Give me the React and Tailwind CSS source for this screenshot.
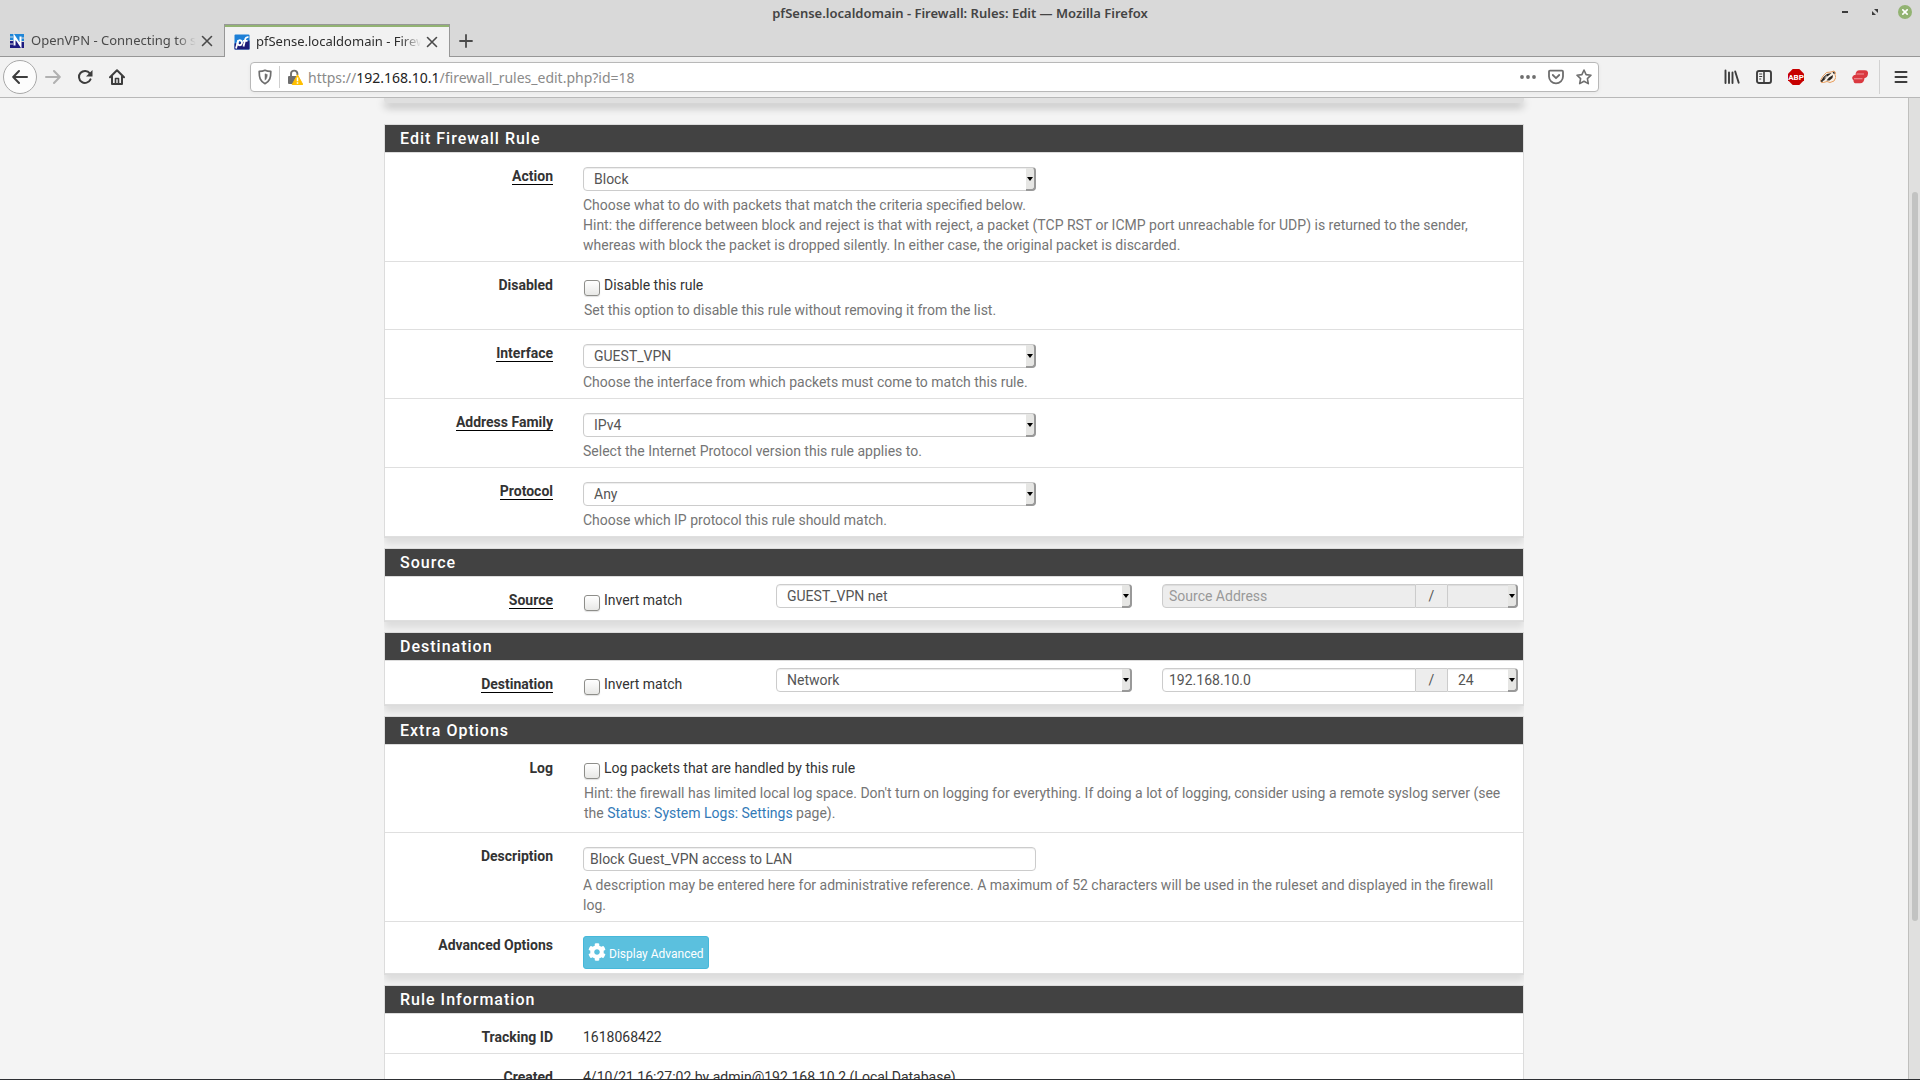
// src/App.jsx
import { FaCog } from "react-icons/fa";

const HELP = "text-sm leading-5 text-[#757575]";
const FIELD =
  "h-6 w-full border border-[#ccc] bg-white text-sm leading-5 text-[#555] shadow-[inset_0_1px_1px_rgba(0,0,0,0.075)] outline-none";

/* ---------- browser icons ---------- */

function CloseIcon() {
  return (
    <svg width="12" height="12" viewBox="0 0 12 12" stroke="#4a4a4a" strokeWidth="1.6" strokeLinecap="round">
      <path d="M1.5 1.5l9 9M10.5 1.5l-9 9" />
    </svg>
  );
}

function NetgateIcon() {
  return (
    <svg width="16" height="16" viewBox="0 0 16 16">
      <path d="M1 1h14v7H1z" fill="#1f86d8" />
      <path d="M1 8h14v7H1z" fill="#1d1a80" />
      <path d="M0 4h4M0 7.500h4M0 11h4" stroke="#d9d9d9" strokeWidth="1.200" />
      <path d="M5.500 12.500v-9l6 9v-9" fill="none" stroke="#fff" strokeWidth="2" />
      <path d="M12 5h4M12 8.500h4" stroke="#d9d9d9" strokeWidth="1" />
    </svg>
  );
}

function PfSenseIcon() {
  return (
    <svg width="16" height="16" viewBox="0 0 16 16">
      <rect x="0.500" y="0.500" width="15" height="15" rx="1" fill="#1d7fd6" />
      <path d="M0.500 9.500l15-3V15a.5.5 0 0 1-.5.5H1a.5.5 0 0 1-.5-.5z" fill="#1b1a78" />
      <g fill="none" stroke="#fff" strokeWidth="1.800">
        <path d="M2 14.500L4.200 6.200" />
        <ellipse cx="5.800" cy="8.700" rx="2.200" ry="2.500" transform="rotate(15 5.800 8.700)" />
        <path d="M9.500 12.500l1.800-7.500c.4-1.700 1.300-2.200 3.200-1.900M9 6.800h4.500" />
      </g>
    </svg>
  );
}

function BackIcon() {
  return (
    <svg width="16" height="16" viewBox="0 0 16 16" fill="none" stroke="#3d3d3d" strokeWidth="2" strokeLinecap="round" strokeLinejoin="round">
      <path d="M15 8H1.500M7 2L1.200 8 7 14" />
    </svg>
  );
}

function ForwardIcon() {
  return (
    <svg width="16" height="16" viewBox="0 0 16 16" fill="none" stroke="#b1b1b1" strokeWidth="2" strokeLinecap="round" strokeLinejoin="round">
      <path d="M1 8h13.500M9 2l5.800 6L9 14" />
    </svg>
  );
}

function ReloadIcon() {
  return (
    <svg width="16" height="16" viewBox="0 0 16 16" fill="none" stroke="#3d3d3d" strokeWidth="2" strokeLinecap="round">
      <path d="M13.500 10.300A6 6 0 1 1 12.800 4.300" />
      <path d="M15.500 1v6.500H9z" fill="#3d3d3d" stroke="none" />
    </svg>
  );
}

function HomeIcon() {
  return (
    <svg width="16" height="16" viewBox="0 0 16 16" fill="none" stroke="#3d3d3d" strokeWidth="2" strokeLinecap="round" strokeLinejoin="round">
      <path d="M1 8.200L8 1.200l7 7M3 7.500V15h10V7.500" />
      <path d="M6.500 14.500V9.500h3v5" strokeWidth="1.600" />
    </svg>
  );
}

function ShieldIcon() {
  return (
    <svg width="14" height="16" viewBox="0 0 14 16" fill="none" stroke="#6e6e6e" strokeWidth="1.700" strokeLinejoin="round">
      <path d="M7 1.200c1.800.9 3.800 1.200 5.800 1.200 0 6-.8 10-5.800 12.300C2 12.400 1.200 8.400 1.200 2.400 3.200 2.400 5.200 2.100 7 1.200z" />
      <path d="M7 4.800v6.400c1.600-1.200 2.200-3 2.300-5.600z" fill="#6e6e6e" strokeWidth="0.500" />
    </svg>
  );
}

function LockWarnIcon() {
  return (
    <svg width="16" height="16" viewBox="0 0 16 16">
      <path d="M4 8V4.800a3.200 3.200 0 0 1 6.400 0V6" fill="none" stroke="#6e6e6e" strokeWidth="1.900" />
      <rect x="1" y="7" width="10" height="8" rx="1" fill="#6e6e6e" />
      <path d="M10.500 5.800L15.800 15.500H5.200z" fill="#ffbf00" stroke="#ffbf00" strokeLinejoin="round" />
      <path d="M10.500 8.600v3.600M10.500 13.300v1.500" stroke="#fff" strokeWidth="1.500" />
    </svg>
  );
}

function PocketIcon() {
  return (
    <svg width="16" height="16" viewBox="0 0 16 16" fill="none" stroke="#6e6e6e" strokeWidth="1.800" strokeLinecap="round" strokeLinejoin="round">
      <path d="M2 1.700h12a1 1 0 0 1 1 1V7.500a7 6.800 0 0 1-14 0V2.700a1 1 0 0 1 1-1z" />
      <path d="M4.800 6L8 9.200 11.200 6" />
    </svg>
  );
}

function StarIcon() {
  return (
    <svg width="16" height="16" viewBox="0 0 16 16" fill="none" stroke="#6e6e6e" strokeWidth="1.600" strokeLinejoin="round">
      <path d="M8 1l2.100 4.600 4.900.6-3.600 3.400.9 5L8 12.200 3.700 14.600l.9-5L1 6.200l4.900-.6z" />
    </svg>
  );
}

function LibraryIcon() {
  return (
    <svg width="16" height="16" viewBox="0 0 16 16" fill="none" stroke="#3d3d3d" strokeWidth="1.900" strokeLinecap="round">
      <path d="M1.500 1.500v12.500M5 3.500V14M8.500 3.500V14M11.200 2.500l3.500 11.200" />
    </svg>
  );
}

function SidebarIcon() {
  return (
    <svg width="16" height="16" viewBox="0 0 16 16" fill="none" stroke="#3d3d3d" strokeWidth="1.900">
      <rect x="1" y="2" width="14" height="12" rx="2" />
      <path d="M8 2v12" strokeWidth="1.600" />
      <path d="M3.200 5h3M3.200 7.500h3M3.200 10h2" strokeWidth="1" />
    </svg>
  );
}

function AdblockIcon() {
  return (
    <svg width="16" height="16" viewBox="0 0 16 16">
      <path d="M4.700 0h6.600L16 4.700v6.600L11.300 16H4.700L0 11.300V4.700z" fill="#c70000" />
      <text x="8" y="11" textAnchor="middle" fontSize="8" fontWeight="700" fill="#fff" className="font-['Roboto',sans-serif]">
        ABP
      </text>
    </svg>
  );
}

function BadgerIcon() {
  return (
    <svg width="16" height="16" viewBox="0 0 16 16">
      <path d="M0.500 11.500L3 7l3.500-3.500L11 3l3-1 1.700 1.500-.7 2 .8 3-1.800 3.500-4 1.500-3-1-3.500 1H1.500z" fill="#f8f1e8" stroke="#e58a3c" strokeWidth="0.800" strokeLinejoin="round" />
      <path d="M1 12l2.500-4L7 5l4.500-1L9 6.200 6.500 8 4 11.500z" fill="#2a2420" />
      <path d="M6.500 11.500l2.500-3 4-2.500-.5 3-3 2.500z" fill="#2a2420" />
      <path d="M4.500 9l2.500-2.300" stroke="#f8f1e8" strokeWidth="0.900" />
      <path d="M12.500 3l1.500-.3 1 1.300-1 1.200z" fill="#2a2420" />
      <path d="M0.800 11.300h2v1.500h-2z" fill="#2a2420" />
    </svg>
  );
}

function ExpressVpnIcon() {
  return (
    <svg width="16" height="16" viewBox="0 0 16 16">
      <path d="M7.500 1.200h5.500a3 3 0 0 1 3 3.300c-.2 2.800-1.500 4.700-4 4.700h.5c-.3 3-1.700 5.100-4.500 5.100H4.300c-2 0-3-1.300-2.800-3.100C.2 10.300-.1 9 .5 7.800 1.200 6.300 2.300 6 3.500 6 3.600 3 5 1.200 7.500 1.200z" fill="#da3940" />
      <path d="M4.500 5h7.500M2 9.800h8.500" stroke="#f0989c" strokeWidth="1.100" />
    </svg>
  );
}

/* ---------- browser window ---------- */

function TitleBar() {
  return (
    <header className="relative flex h-6 shrink-0 items-center justify-center">
      <h1 className="pt-[2px] text-[13px] leading-5 font-semibold text-[#444]">
        pfSense.localdomain - Firewall: Rules: Edit — Mozilla Firefox
      </h1>
      <div className="absolute top-[5px] right-2 flex items-center gap-4">
        <button aria-label="Minimize" className="flex size-[14px] items-center justify-center">
          <span className="h-[2px] w-[6px] bg-[#3c3c3c]" />
        </button>
        <button aria-label="Restore" className="flex size-[14px] items-center justify-center">
          <svg width="6" height="6" viewBox="0 0 6 6" fill="#3c3c3c">
            <path d="M2 0h4v4zM0 2v4h4z" />
          </svg>
        </button>
        <button aria-label="Close" className="flex size-[14px] items-center justify-center rounded-full bg-[#92b372]">
          <svg width="6" height="6" viewBox="0 0 6 6" stroke="#fff" strokeWidth="1.600">
            <path d="M0.300 0.300l5.400 5.400M5.700 0.300L0.300 5.700" />
          </svg>
        </button>
      </div>
    </header>
  );
}

function Tab({ icon, title, active }) {
  return (
    <div
      className={
        active
          ? "flex w-[226px] items-center border-x border-t border-[#979797] bg-[#f2f2f2] pt-px pr-[11px] pl-[9px] text-[#2e2e2e] shadow-[inset_0_2px_0_#92b372]"
          : "mb-px flex w-56 items-center pt-[2px] pr-[11px] pl-[9px] text-[#4a4a4a]"
      }
    >
      {icon}
      <span className="ml-[6px] flex-1 overflow-hidden text-[13px] whitespace-nowrap [mask-image:linear-gradient(to_right,#000_88%,transparent)]">
        {title}
      </span>
      <button aria-label="Close tab" className="ml-[5px]">
        <CloseIcon />
      </button>
    </div>
  );
}

function TabStrip() {
  return (
    <nav className="flex h-[33px] shrink-0 bg-[linear-gradient(#979797,#979797)] bg-[length:100%_1px] bg-bottom bg-no-repeat">
      <Tab icon={<NetgateIcon />} title="OpenVPN - Connecting to site" />
      <Tab active icon={<PfSenseIcon />} title="pfSense.localdomain - Firewall" />
      <button aria-label="New tab" className="ml-[9px]">
        <svg width="14" height="14" viewBox="0 0 14 14" stroke="#4a4a4a" strokeWidth="1.800" strokeLinecap="round">
          <path d="M7 1v12M1 7h12" />
        </svg>
      </button>
    </nav>
  );
}

function Toolbar() {
  return (
    <div className="flex h-[41px] shrink-0 items-center border-b border-[#b8b8b8] bg-[#f2f2f2]">
      <button aria-label="Back" className="ml-[3px] flex size-[34px] items-center justify-center rounded-full border border-[#a8a8a8] bg-[#fcfcfc]">
        <BackIcon />
      </button>
      <div className="ml-2 flex gap-4">
        <button aria-label="Forward">
          <ForwardIcon />
        </button>
        <button aria-label="Reload">
          <ReloadIcon />
        </button>
        <button aria-label="Home">
          <HomeIcon />
        </button>
      </div>
      <div className="ml-[125px] flex h-[30px] flex-1 items-center rounded border border-[#b8b8b8] bg-white pr-[6px] pl-[7px] shadow-[0_1px_4px_rgba(0,0,0,0.05)]">
        <ShieldIcon />
        <span className="mx-[7px] h-[22px] w-px bg-[#cfcfcf]" />
        <LockWarnIcon />
        <p className="ml-[5px] flex-1 pt-px text-sm text-[#8a8a8a]">
          https://<span className="text-[#222]">192.168.10.1</span>/firewall_rules_edit.php?id=18
        </p>
        <div className="flex gap-3">
          <button aria-label="Page actions">
            <svg width="16" height="16" viewBox="0 0 16 16" fill="#6e6e6e">
              <circle cx="2" cy="8" r="1.900" />
              <circle cx="8" cy="8" r="1.900" />
              <circle cx="14" cy="8" r="1.900" />
            </svg>
          </button>
          <button aria-label="Save to Pocket">
            <PocketIcon />
          </button>
          <button aria-label="Bookmark">
            <StarIcon />
          </button>
        </div>
      </div>
      <div className="ml-[125px] flex gap-4">
        <button aria-label="Library">
          <LibraryIcon />
        </button>
        <button aria-label="Sidebars">
          <SidebarIcon />
        </button>
        <button aria-label="Adblock Plus">
          <AdblockIcon />
        </button>
        <button aria-label="Privacy Badger">
          <BadgerIcon />
        </button>
        <button aria-label="ExpressVPN">
          <ExpressVpnIcon />
        </button>
      </div>
      <span className="ml-[11px] h-[34px] w-px bg-[#d2d2d2]" />
      <button aria-label="Menu" className="mr-3 ml-[14px]">
        <svg width="14" height="14" viewBox="0 0 14 14" stroke="#3d3d3d" strokeWidth="2" strokeLinecap="round">
          <path d="M1.500 2h11M1.500 7h11M1.500 12h11" />
        </svg>
      </button>
    </div>
  );
}

/* ---------- form pieces ---------- */

function Panel({ title, children }) {
  return (
    <section className="mb-[10px] border border-[#dcdcdc] bg-white shadow-[0_6px_8px_rgba(0,0,0,0.1)]">
      <h2 className="h-7 border-b border-[#dcdcdc] bg-[#424242] bg-clip-padding px-[15px] text-base leading-[27px] font-medium tracking-[1px] text-white">
        {title}
      </h2>
      {children}
    </section>
  );
}

function RowLabel({ htmlFor, required, children }) {
  const Tag = htmlFor ? "label" : "span";
  return (
    <Tag htmlFor={htmlFor} className="pt-[13px] text-right text-sm leading-5 font-bold text-[#333]">
      <span className={required ? "border-b border-black" : ""}>{children}</span>
    </Tag>
  );
}

function Row({ label, htmlFor, required, className = "pt-[14px] pb-[6px]", children }) {
  return (
    <div className="grid grid-cols-[168px_1fr] gap-x-[30px] border-b border-[#dfdfdf]">
      <RowLabel htmlFor={htmlFor} required={required}>
        {label}
      </RowLabel>
      <div className={`pr-[15px] ${className}`}>{children}</div>
    </div>
  );
}

function Select({ className = "rounded", options, ...props }) {
  return (
    <div className="relative w-full">
      <select {...props} className={`${FIELD} ${className} block appearance-none pr-3 pl-[10px] disabled:bg-[#ededed] disabled:opacity-100`}>
        {options.map((option) => (
          <option key={option}>{option}</option>
        ))}
      </select>
      <span className="pointer-events-none absolute inset-y-0 right-0 flex w-[10px] items-center justify-center rounded-r border-t border-r-2 border-b-2 border-t-[#ccc] border-r-[#999] border-b-[#999] bg-[#e6e6e4]">
        <svg width="6" height="4" viewBox="0 0 6 4">
          <path d="M0 0h6L3 4z" />
        </svg>
      </span>
    </div>
  );
}

function Checkbox({ id, label }) {
  return (
    <label htmlFor={id} className="ml-px flex items-start gap-1 text-sm leading-5 text-[#333]">
      <input
        id={id}
        type="checkbox"
        className="mt-[5px] size-4 shrink-0 appearance-none rounded-[3px] border border-[#8e8e8a] bg-linear-to-b from-white to-[#e8e8e6] shadow-[0_1px_1px_rgba(0,0,0,0.12)]"
      />
      {label}
    </label>
  );
}

function SelectRow({ id, label, options, children }) {
  return (
    <Row label={label} htmlFor={id} required>
      <div className="w-[453px]">
        <Select id={id} options={options} />
      </div>
      <p className={`mt-1 ${HELP}`}>{children}</p>
    </Row>
  );
}

function AddressRow({ name, label, type, address, placeholder, mask, disabled }) {
  return (
    <div className="grid grid-cols-[168px_163px_1fr_1fr] gap-x-[30px] border-b border-[#dfdfdf] pr-[5px]">
      <RowLabel required>{label}</RowLabel>
      <div className="pt-[13px]">
        <Checkbox id={`${name}_not`} label="Invert match" />
      </div>
      <div className="pt-[7px] pb-3">
        <Select aria-label={`${label} type`} options={[type]} />
      </div>
      <div className="flex pt-[7px] pb-3">
        <input
          type="text"
          aria-label={`${label} address`}
          defaultValue={address}
          placeholder={placeholder}
          disabled={disabled}
          className={`${FIELD} flex-1 rounded-l px-[6px] placeholder:text-[#999] disabled:bg-[#ededed]`}
        />
        <span className="h-6 w-[31px] border-y border-[#ccc] bg-[#ededed] text-center text-sm leading-[22px] text-[#555]">/</span>
        <div className="w-[71px]">
          <Select aria-label={`${label} mask`} options={[mask]} disabled={disabled} className="rounded-r" />
        </div>
      </div>
    </div>
  );
}

function RuleForm() {
  return (
    <form className="overflow-x-clip font-['Roboto',sans-serif]" onSubmit={(e) => e.preventDefault()}>
      <Panel title="Edit Firewall Rule">
        <SelectRow id="action" label="Action" options={["Block", "Pass", "Reject"]}>
          Choose what to do with packets that match the criteria specified below.
          <br />
          Hint: the difference between block and reject is that with reject, a packet (TCP RST or ICMP port unreachable
          for UDP) is returned to the sender, whereas with block the packet is dropped silently. In either case, the
          original packet is discarded.
        </SelectRow>
        <Row label="Disabled" className="pt-[13px] pb-[9px]">
          <Checkbox id="disabled" label="Disable this rule" />
          <p className={`mt-1 ml-px ${HELP}`}>Set this option to disable this rule without removing it from the list.</p>
        </Row>
        <SelectRow id="interface" label="Interface" options={["GUEST_VPN"]}>
          Choose the interface from which packets must come to match this rule.
        </SelectRow>
        <SelectRow id="ipprotocol" label="Address Family" options={["IPv4", "IPv6", "IPv4+IPv6"]}>
          Select the Internet Protocol version this rule applies to.
        </SelectRow>
        <SelectRow id="proto" label="Protocol" options={["Any", "TCP", "UDP"]}>
          Choose which IP protocol this rule should match.
        </SelectRow>
      </Panel>

      <Panel title="Source">
        <AddressRow name="src" label="Source" type="GUEST_VPN net" placeholder="Source Address" mask="" disabled />
      </Panel>

      <Panel title="Destination">
        <AddressRow name="dst" label="Destination" type="Network" address="192.168.10.0" mask="24" />
      </Panel>

      <Panel title="Extra Options">
        <Row label="Log" className="pt-[13px] pb-[9px]">
          <Checkbox id="log" label="Log packets that are handled by this rule" />
          <p className={`mt-1 ml-px ${HELP}`}>
            Hint: the firewall has limited local log space. Don't turn on logging for everything. If doing a lot of
            logging, consider using a remote syslog server (see the{" "}
            <a href="#settings" className="text-[#337ab7]">
              Status: System Logs: Settings
            </a>{" "}
            page).
          </p>
        </Row>
        <Row label="Description" htmlFor="descr">
          <input id="descr" type="text" defaultValue="Block Guest_VPN access to LAN" className={`${FIELD} block max-w-[453px] rounded px-[6px]`} />
          <p className={`mt-1 ${HELP}`}>
            A description may be entered here for administrative reference. A maximum of 52 characters will be used in
            the ruleset and displayed in the firewall log.
          </p>
        </Row>
        <Row label="Advanced Options" className="pt-[14px] pb-1">
          <button
            type="button"
            className="flex h-[33px] items-center gap-[3px] rounded-[3px] border border-[#46b8da] bg-[#5bc0de] px-1 pt-[2px] text-xs text-white"
          >
            <FaCog size={18} className="mb-1" />
            Display Advanced
          </button>
        </Row>
      </Panel>

      <Panel title="Rule Information">
        <Row label="Tracking ID" className="pt-[13px] pb-[6px]">
          <p className="text-sm leading-5 text-[#333]">1618068422</p>
        </Row>
        <Row label="Created" className="pt-[13px] pb-[6px]">
          <p className="text-sm leading-5 text-[#333]">4/10/21 16:27:02 by admin@192.168.10.2 (Local Database)</p>
        </Row>
      </Panel>
    </form>
  );
}

export default function App() {
  return (
    <div className="flex h-screen flex-col overflow-hidden bg-[#d9d9d9] font-['Noto_Sans',sans-serif]">
      <TitleBar />
      <TabStrip />
      <Toolbar />
      <div className="flex min-h-0 flex-1 border-b border-[#2d2f33] bg-[#f4f4f4]">
        <main className="h-full flex-1 overflow-hidden">
          <div className="mx-auto w-full max-w-[1140px]">
            {/* tail of the scrolled-off panel */}
            <div className="mb-[21px] h-[5px] rounded-b bg-[#dfdfdf] shadow-[0_4px_8px_rgba(0,0,0,0.3)]" />
            <RuleForm />
          </div>
        </main>
        <div className="flex w-3 flex-col items-center border-l border-[#bfbfbd] bg-[#e0e0df]">
          <div className="grow-[94]" />
          <div className="w-[6px] grow-[729] rounded-full bg-[#c2c3c2]" />
          <div className="grow-[158]" />
        </div>
      </div>
    </div>
  );
}
